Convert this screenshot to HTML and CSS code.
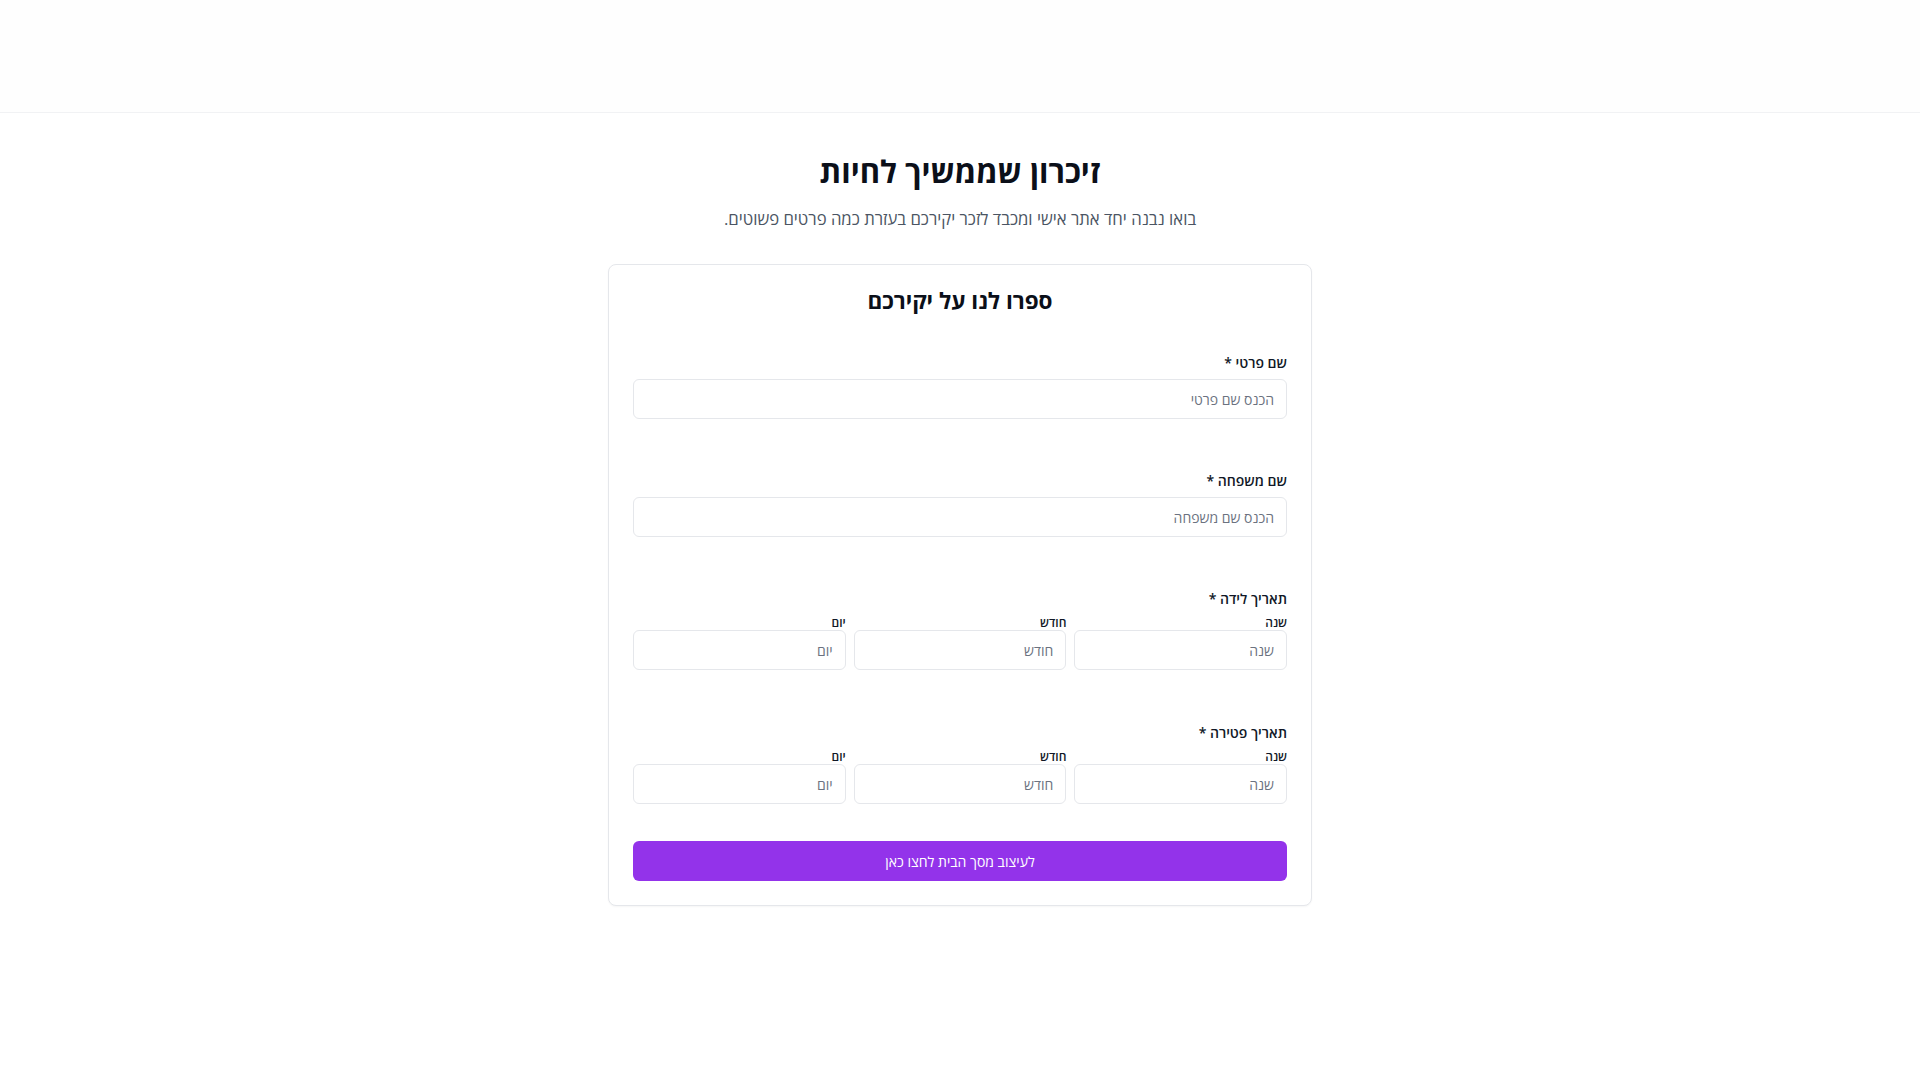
FILE: index.html
```html
<!DOCTYPE html>
<html lang="he" dir="rtl">
<head>
    <meta charset="UTF-8">
    <meta name="viewport" content="width=device-width, initial-scale=1.0">
    <title>זיכרון שממשיך לחיות</title>
    <link rel="stylesheet" href="styles.css">
</head>
<body>
    <header class="top-bar"></header>

    <main class="page">
        <h1 class="page-title">זיכרון שממשיך לחיות</h1>
        <p class="page-sub">בואו נבנה יחד אתר אישי ומכבד לזכר יקירכם בעזרת כמה פרטים פשוטים.</p>

        <form class="card" onsubmit="return false">
            <h2 class="card-title">ספרו לנו על יקירכם</h2>

            <div class="field">
                <label class="field-label" for="first-name">שם פרטי *</label>
                <input class="text-input" type="text" id="first-name" placeholder="הכנס שם פרטי">
            </div>

            <div class="field">
                <label class="field-label" for="last-name">שם משפחה *</label>
                <input class="text-input" type="text" id="last-name" placeholder="הכנס שם משפחה">
            </div>

            <div class="field field-date">
                <span class="field-label">תאריך לידה *</span>
                <div class="date-row">
                    <div class="date-part">
                        <label class="sub-label" for="birth-year">שנה</label>
                        <input class="text-input" type="text" id="birth-year" placeholder="שנה">
                    </div>
                    <div class="date-part">
                        <label class="sub-label" for="birth-month">חודש</label>
                        <input class="text-input" type="text" id="birth-month" placeholder="חודש">
                    </div>
                    <div class="date-part">
                        <label class="sub-label" for="birth-day">יום</label>
                        <input class="text-input" type="text" id="birth-day" placeholder="יום">
                    </div>
                </div>
            </div>

            <div class="field field-date field-last">
                <span class="field-label">תאריך פטירה *</span>
                <div class="date-row">
                    <div class="date-part">
                        <label class="sub-label" for="death-year">שנה</label>
                        <input class="text-input" type="text" id="death-year" placeholder="שנה">
                    </div>
                    <div class="date-part">
                        <label class="sub-label" for="death-month">חודש</label>
                        <input class="text-input" type="text" id="death-month" placeholder="חודש">
                    </div>
                    <div class="date-part">
                        <label class="sub-label" for="death-day">יום</label>
                        <input class="text-input" type="text" id="death-day" placeholder="יום">
                    </div>
                </div>
            </div>

            <button class="submit-btn" type="submit">לעיצוב מסך הבית לחצו כאן</button>
        </form>
    </main>
</body>
</html>
```

FILE: styles.css
```css
* {
    box-sizing: border-box;
}
body {
    margin: 0;
    padding: 0;
    background: #fff;
    color: #111827;
    font-family: "Open Sans", "Liberation Sans", "DejaVu Sans", sans-serif;
}
.top-bar {
    height: 113px;
    background: #fefefe;
    border-bottom: 1px solid #f1f2f4;
}
.page {
    display: flex;
    flex-direction: column;
    align-items: center;
    padding: 38px 16px 40px;
}
.page-title {
    margin: 0;
    font-size: 31px;
    line-height: 40px;
    font-weight: 700;
    color: #0b0f19;
}
.page-sub {
    margin: 14px 0 31px;
    font-size: 16.7px;
    line-height: 28px;
    color: #4b5563;
}
.card {
    width: 704px;
    padding: 20px 24px 24px;
    background: #fff;
    border: 1px solid #e5e7eb;
    border-radius: 8px;
    box-shadow: 0 1px 2px rgba(0, 0, 0, 0.04);
}
.card-title {
    margin: 0 0 36px;
    text-align: center;
    font-size: 22.5px;
    line-height: 32px;
    font-weight: 700;
    color: #0b0f19;
}
.field {
    display: flex;
    flex-direction: column;
    margin-bottom: 52px;
}
.field-date {
    margin-bottom: 53px;
}
.field-last {
    margin-bottom: 37px;
}
.field-label {
    display: block;
    margin-bottom: 6px;
    font-size: 14px;
    line-height: 20px;
    font-weight: 600;
    color: #111827;
}
.field-date .field-label {
    margin-bottom: 7px;
}
.date-row {
    display: grid;
    grid-template-columns: repeat(3, 1fr);
    gap: 8px;
}
.date-part {
    display: flex;
    flex-direction: column;
}
.sub-label {
    display: block;
    margin-bottom: 0;
    font-size: 12px;
    line-height: 14px;
    font-weight: 600;
    color: #111827;
}
.text-input {
    width: 100%;
    height: 40px;
    padding: 0 12px;
    border: 1px solid #e5e7eb;
    border-radius: 6px;
    background: #fff;
    font-family: inherit;
    font-size: 14px;
    color: #111827;
    direction: rtl;
    outline: none;
}
.text-input::placeholder {
    color: #6b7280;
}
.submit-btn {
    display: block;
    width: 100%;
    height: 40px;
    border: 0;
    border-radius: 6px;
    background: #9333ea;
    color: #fff;
    font-family: inherit;
    font-size: 14px;
    font-weight: 500;
    cursor: pointer;
}
```
